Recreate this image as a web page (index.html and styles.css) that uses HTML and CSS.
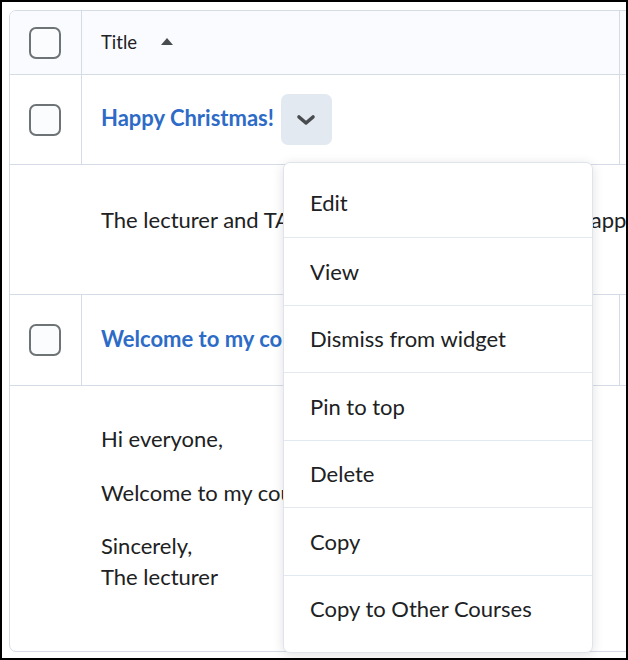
FILE: index.html
```html
<!DOCTYPE html>
<html>
<head>
<meta charset="utf-8">
<link rel="stylesheet" href="styles.css">
</head>
<body>
<div class="frame">
  <div class="tbl">
    <div class="row head">
      <div class="cb-cell"><span class="cb"></span></div>
      <div class="title-cell"><span class="th">Title</span><span class="sort"></span></div>
      <div class="extra"></div>
    </div>
    <div class="row item">
      <div class="cb-cell"><span class="cb"></span></div>
      <div class="title-cell"><a class="link">Happy Christmas!</a><span class="ddbtn"><svg width="20" height="12" viewBox="0 0 20 12"><path d="M3 3 L10 9 L17 3" fill="none" stroke="#494c4e" stroke-width="3.6" stroke-linecap="round" stroke-linejoin="round"/></svg></span></div>
      <div class="extra"></div>
    </div>
    <div class="row content c1">
      <p>The lecturer and TAs would like to wish everyone happy Christmas!</p>
    </div>
    <div class="row item item2">
      <div class="cb-cell"><span class="cb"></span></div>
      <div class="title-cell"><a class="link">Welcome to my course!</a></div>
      <div class="extra"></div>
    </div>
    <div class="row content c2">
      <p>Hi everyone,</p>
      <p>Welcome to my course!</p>
      <p>Sincerely,<br>The lecturer</p>
    </div>
  </div>
  <div class="menu">
    <div class="mi">Edit</div>
    <div class="mi">View</div>
    <div class="mi">Dismiss from widget</div>
    <div class="mi">Pin to top</div>
    <div class="mi">Delete</div>
    <div class="mi">Copy</div>
    <div class="mi">Copy to Other Courses</div>
  </div>
</div>
</body>
</html>
```
FILE: styles.css
```css
html, body { margin: 0; padding: 0; background: #fff; }
body { font-family: Lato, "Noto Sans", sans-serif; color: #202122; }
.frame {
  width: 628px; height: 660px; box-sizing: border-box;
  border: 2px solid #000; overflow: hidden; position: relative;
  padding: 8px 0 0 7px; background: #fff;
}
.tbl {
  width: 760px; border: 1px solid #d6dce6; border-radius: 7px;
  overflow: hidden;
}
.row { display: flex; border-top: 1px solid #d6dce6; }
.row:first-child { border-top: none; }
.head { height: 63px; background: #f9fbff; }
.item { height: 89px; }
.item2 { height: 90px; }
.cb-cell {
  width: 71px; flex: none; border-right: 1px solid #d6dce6;
  display: flex; align-items: center; justify-content: center;
}
.cb {
  width: 28px; height: 28px; border: 2px solid #6e7376; border-radius: 7px;
  background: #fbfcfe; margin-left: -1px;
}
.title-cell {
  width: 518px; flex: none; padding-left: 19px; border-right: 1px solid #d6dce6;
  display: flex; align-items: center;
}
.extra { flex: 1; }
.th { font-size: 18.5px; color: #202122; margin-bottom: 2px; }
.sort {
  width: 0; height: 0; margin-left: 24px; margin-top: -3px;
  border-left: 6.5px solid transparent; border-right: 6.5px solid transparent;
  border-bottom: 7px solid #494c4e;
}
.link { color: #2d6bc7; font-weight: 700; font-size: 22px; margin-bottom: 4px; }
.ddbtn {
  width: 51px; height: 51px; margin-left: 7px; border-radius: 7px;
  background: #e3e9f1; display: flex; align-items: center; justify-content: center;
}
.ddbtn svg { display: block; margin-top: 1px; }
.content { display: block; padding-left: 91px; font-size: 22px; line-height: 31px; }
.content p { margin: 0; white-space: nowrap; }
.c1 { height: 130px; box-sizing: border-box; padding-top: 39px; }
.c2 { height: 266px; box-sizing: border-box; padding-top: 37px; }
.c2 p + p { margin-top: 23px; }
.c2 p:last-child { margin-top: 22px; }
.menu {
  position: absolute; left: 281px; top: 160px; width: 310px; height: 491px;
  box-sizing: border-box; border: 1px solid #dfe4ec; border-radius: 7px;
  background: #fff; padding: 5px 0 8px;
  box-shadow: 0 2px 12px rgba(0,0,0,0.12);
}
.mi {
  height: 67.5px; box-sizing: border-box; border-top: 1px solid #e3e9f1;
  display: flex; align-items: center; padding-left: 26px; font-size: 22px;
  color: #202122;
}
.mi:first-child { border-top: none; height: 69px; }
```
